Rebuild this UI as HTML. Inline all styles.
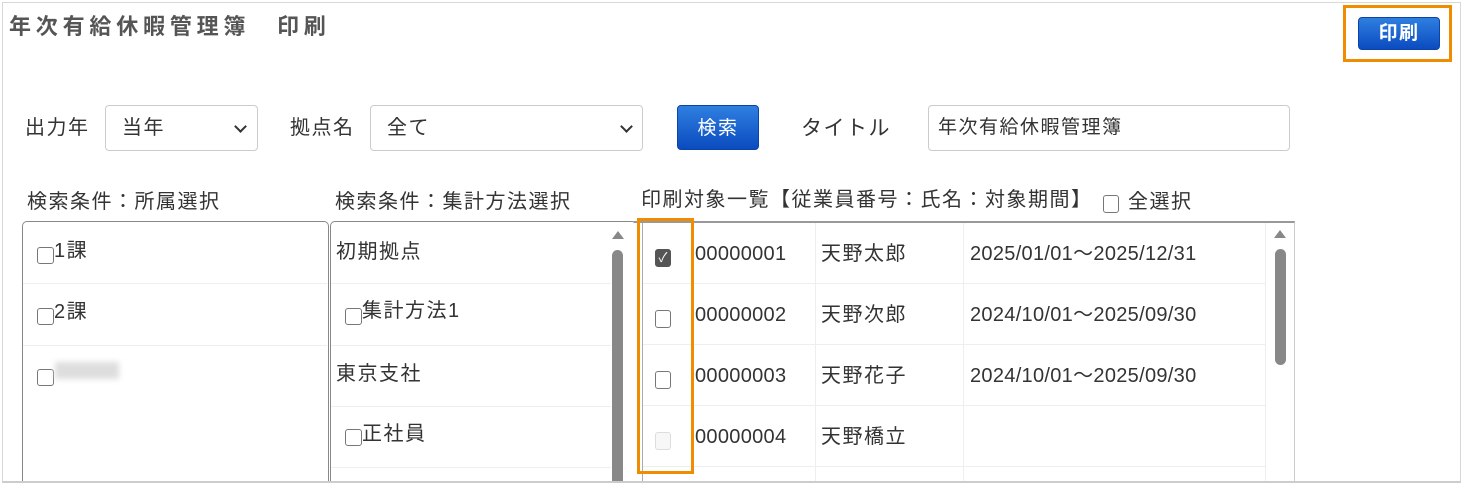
<!DOCTYPE html><html><head><meta charset="utf-8"><style>
body{margin:0;width:1467px;height:488px;background:#fff;position:relative;overflow:hidden;font-family:"Liberation Sans","Noto Sans CJK JP",sans-serif;color:#333;font-size:20px;letter-spacing:1.5px}
.a{position:absolute}
.frame{left:2px;top:2px;width:1457px;height:478px;border:1px solid #d8d8d8;border-bottom:2px solid #ccc;z-index:5}
.t{line-height:1;white-space:nowrap}
.n{letter-spacing:0.3px}
.sel{border:1px solid #ccc;border-radius:4px;background:#fff}
.btn{background:linear-gradient(#2f7fe0,#0b4bc0);border-radius:4px;color:#fff;text-align:center;border:1px solid #0a44a8;box-sizing:border-box}
.cb{width:17px;height:17px;border:1px solid #777;border-radius:3px;box-sizing:border-box;background:#fff}
.hl{height:1px;background:#eee}
.orange{border:3px solid #f08c00;box-sizing:border-box}
.chev{width:7px;height:7px;border-right:2px solid #333;border-bottom:2px solid #333;transform:rotate(45deg)}
.sb{background:#888;border-radius:6px;width:11px}
.tri{width:0;height:0;border-left:6px solid transparent;border-right:6px solid transparent;border-bottom:8px solid #888}
</style></head><body>
<div class="a t" style="left:9px;top:16px;font-size:22px;letter-spacing:4.8px;font-weight:bold;color:#555">年次有給休暇管理簿　印刷</div>
<div class="a orange" style="left:1343px;top:5px;width:109px;height:57px"></div>
<div class="a btn" style="left:1358px;top:17px;width:82px;height:33px;line-height:31px;font-size:19px;font-weight:bold">印刷</div>

<div class="a t" style="left:25px;top:118px">出力年</div>
<div class="a sel" style="left:105px;top:105px;width:151px;height:44px"></div>
<div class="a t" style="left:122px;top:118px">当年</div>
<div class="a chev" style="left:236px;top:122px"></div>
<div class="a t" style="left:290px;top:118px">拠点名</div>
<div class="a sel" style="left:370px;top:105px;width:271px;height:44px"></div>
<div class="a t" style="left:387px;top:118px">全て</div>
<div class="a chev" style="left:622px;top:122px"></div>
<div class="a btn" style="left:677px;top:105px;width:82px;height:45px;line-height:45px;font-size:19px">検索</div>
<div class="a t" style="left:801px;top:118px;font-size:21px">タイトル</div>
<div class="a sel" style="left:928px;top:105px;width:360px;height:44px"></div>
<div class="a t" style="left:938px;top:118px;font-size:19px">年次有給休暇管理簿</div>

<div class="a t" style="left:27px;top:192px">検索条件：所属選択</div>
<div class="a t" style="left:335px;top:192px">検索条件：集計方法選択</div>
<div class="a t" style="left:641px;top:190px">印刷対象一覧【従業員番号：氏名：対象期間】</div>
<div class="a cb" style="left:1103px;top:195px;width:16px;height:18px"></div>
<div class="a t" style="left:1128px;top:192px">全選択</div>

<div class="a" style="left:22px;top:221px;width:305px;height:262px;border:1px solid #888;border-bottom:none;border-radius:5px 5px 0 0"></div>
<div class="a hl" style="left:23px;top:283px;width:304px"></div>
<div class="a hl" style="left:23px;top:345px;width:304px"></div>
<div class="a cb" style="left:37px;top:247px"></div><div class="a t" style="left:54px;top:241px">1課</div>
<div class="a cb" style="left:37px;top:308px"></div><div class="a t" style="left:54px;top:302px">2課</div>
<div class="a cb" style="left:37px;top:369px"></div>
<div class="a" style="left:55px;top:362px;width:64px;height:17px;background:#ddd;filter:blur(3px)"></div>

<div class="a" style="left:330px;top:221px;width:320px;height:262px;border:1px solid #888;border-bottom:none;border-radius:5px 5px 0 0"></div>
<div class="a hl" style="left:331px;top:283px;width:280px"></div>
<div class="a hl" style="left:331px;top:345px;width:280px"></div>
<div class="a hl" style="left:331px;top:406px;width:280px"></div>
<div class="a hl" style="left:331px;top:467px;width:280px"></div>
<div class="a t" style="left:336px;top:242px">初期拠点</div>
<div class="a cb" style="left:345px;top:308px"></div><div class="a t" style="left:362px;top:301px">集計方法1</div>
<div class="a t" style="left:336px;top:364px">東京支社</div>
<div class="a cb" style="left:345px;top:429px"></div><div class="a t" style="left:362px;top:424px">正社員</div>
<div class="a tri" style="left:612px;top:231px"></div>
<div class="a sb" style="left:612px;top:250px;height:240px"></div>

<div class="a" style="left:633px;top:221px;width:660px;height:262px;border-top:2px solid #999;border-left:1px solid #ccc;border-right:1px solid #ccc;background:#fff"></div>
<div class="a" style="left:632px;top:223px;width:6px;height:262px;background:#fff"></div>
<div class="a" style="left:642px;top:223px;width:1px;height:260px;background:#aaa"></div>
<div class="a" style="left:815px;top:223px;width:1px;height:260px;background:#eee"></div>
<div class="a" style="left:963px;top:223px;width:1px;height:260px;background:#eee"></div>
<div class="a" style="left:1265px;top:223px;width:1px;height:260px;background:#eee"></div>
<div class="a hl" style="left:643px;top:283px;width:622px"></div>
<div class="a hl" style="left:643px;top:344px;width:622px"></div>
<div class="a hl" style="left:643px;top:405px;width:622px"></div>
<div class="a hl" style="left:643px;top:466px;width:622px"></div>
<div class="a cb" style="left:655px;top:249px;width:16px;height:18px;background:#555;border-color:#555;color:#fff;font-size:13px;line-height:16px;text-align:center;letter-spacing:0">✓</div>
<div class="a cb" style="left:655px;top:310px;width:16px;height:18px"></div>
<div class="a cb" style="left:655px;top:371px;width:16px;height:18px"></div>
<div class="a cb" style="left:655px;top:432px;width:16px;height:18px;border-color:#ddd;background:#f7f7f7"></div>
<div class="a t n" style="left:695px;top:244px">00000001</div><div class="a t" style="left:821px;top:244px">天野太郎</div><div class="a t n" style="left:970px;top:244px">2025/01/01～2025/12/31</div>
<div class="a t n" style="left:695px;top:305px">00000002</div><div class="a t" style="left:821px;top:305px">天野次郎</div><div class="a t n" style="left:970px;top:305px">2024/10/01～2025/09/30</div>
<div class="a t n" style="left:695px;top:366px">00000003</div><div class="a t" style="left:821px;top:366px">天野花子</div><div class="a t n" style="left:970px;top:366px">2024/10/01～2025/09/30</div>
<div class="a t n" style="left:695px;top:427px">00000004</div><div class="a t" style="left:821px;top:427px">天野橋立</div>
<div class="a tri" style="left:1274px;top:230px"></div>
<div class="a sb" style="left:1275px;top:249px;height:116px"></div>
<div class="a orange" style="left:637px;top:218px;width:57px;height:256px"></div>
<div class="a" style="left:0;top:481px;width:1467px;height:10px;background:#fff;z-index:4"></div>
<div class="a frame"></div>
</body></html>
